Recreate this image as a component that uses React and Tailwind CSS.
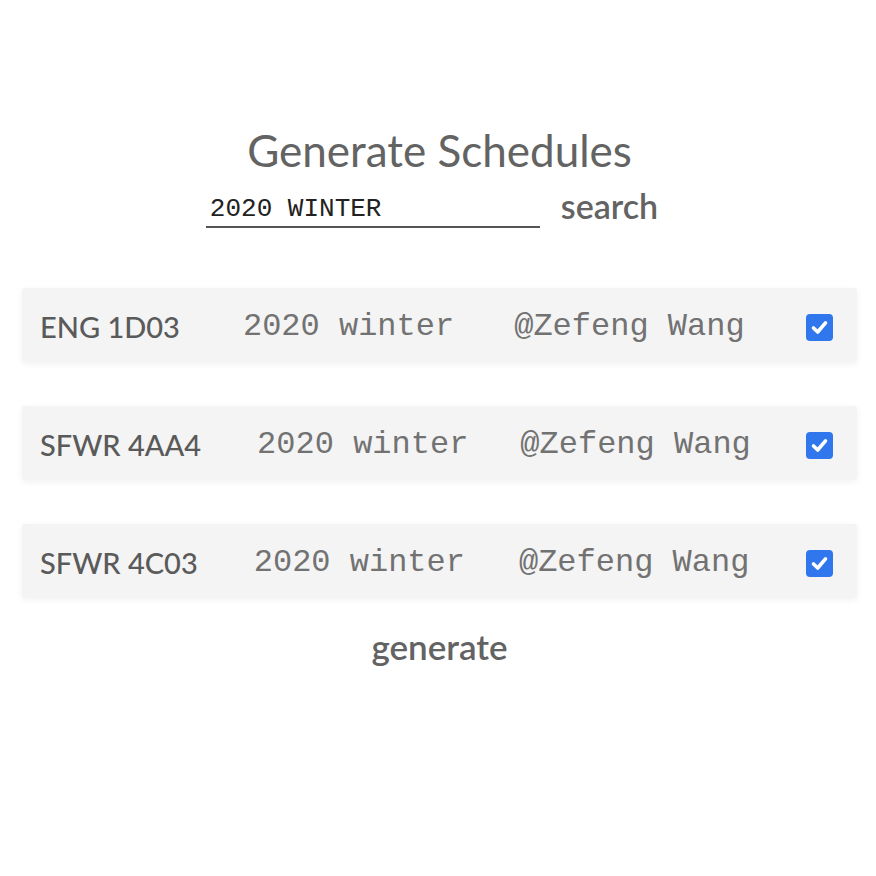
import React from "react";

const rows = [
  { code: "ENG 1D03", term: "2020 winter", who: "@Zefeng Wang", t: "ml-[63px]", w: "ml-[60px]" },
  { code: "SFWR 4AA4", term: "2020 winter", who: "@Zefeng Wang", t: "ml-[56px]", w: "ml-[52px]" },
  { code: "SFWR 4C03", term: "2020 winter", who: "@Zefeng Wang", t: "ml-[56px]", w: "ml-[54px]" },
];

function Check() {
  return (
    <div className="w-[27px] h-[27px] rounded-[4px] bg-[#3077ee] flex items-center justify-center">
      <svg width="21" height="21" viewBox="0 0 21 21" fill="none">
        <path d="M4.5 11 L8.7 15 L16.5 5.8" stroke="white" strokeWidth="3.6" strokeLinecap="round" strokeLinejoin="round" />
      </svg>
    </div>
  );
}

export default function App() {
  return (
    <div className="min-h-[876px] bg-white pl-[22px] pr-[19px] pt-[122px] text-[#636363]" style={{ fontFamily: "Lato, 'Noto Sans', sans-serif" }}>
      <h1 className="text-center text-[44px] leading-[56px] font-normal">Generate Schedules</h1>
      <div className="flex justify-center items-end pr-[15px] mt-[7px]">
        <div className="w-[334px] border-b-2 border-[#555] pl-[4px] pb-[2px] text-[26px] leading-[30px] text-[#222]" style={{ fontFamily: "'Liberation Mono', monospace" }}>
          2020 WINTER
        </div>
        <span className="ml-[21px] text-[34px] leading-[42px] font-semibold mb-[1px]">search</span>
      </div>
      <div className="mt-[60px] flex flex-col gap-[44px]">
        {rows.map((r) => (
          <div key={r.code} className="h-[74px] bg-[#f4f4f4] rounded-[3px] shadow-[0_2px_7px_rgba(0,0,0,0.06)] flex items-center pl-[18px] pr-[24px] pt-[4px]">
            <span className="text-[29px] font-medium text-[#5a5a5a]">{r.code}</span>
            <span className={`${r.t} text-[32px] text-[#727272]`} style={{ fontFamily: "'Liberation Mono', monospace" }}>{r.term}</span>
            <span className={`${r.w} text-[32px] text-[#727272]`} style={{ fontFamily: "'Liberation Mono', monospace" }}>{r.who}</span>
            <div className="ml-auto"><Check /></div>
          </div>
        ))}
      </div>
      <div className="mt-[24px] text-center text-[35px] font-semibold leading-[48px]">generate</div>
    </div>
  );
}
